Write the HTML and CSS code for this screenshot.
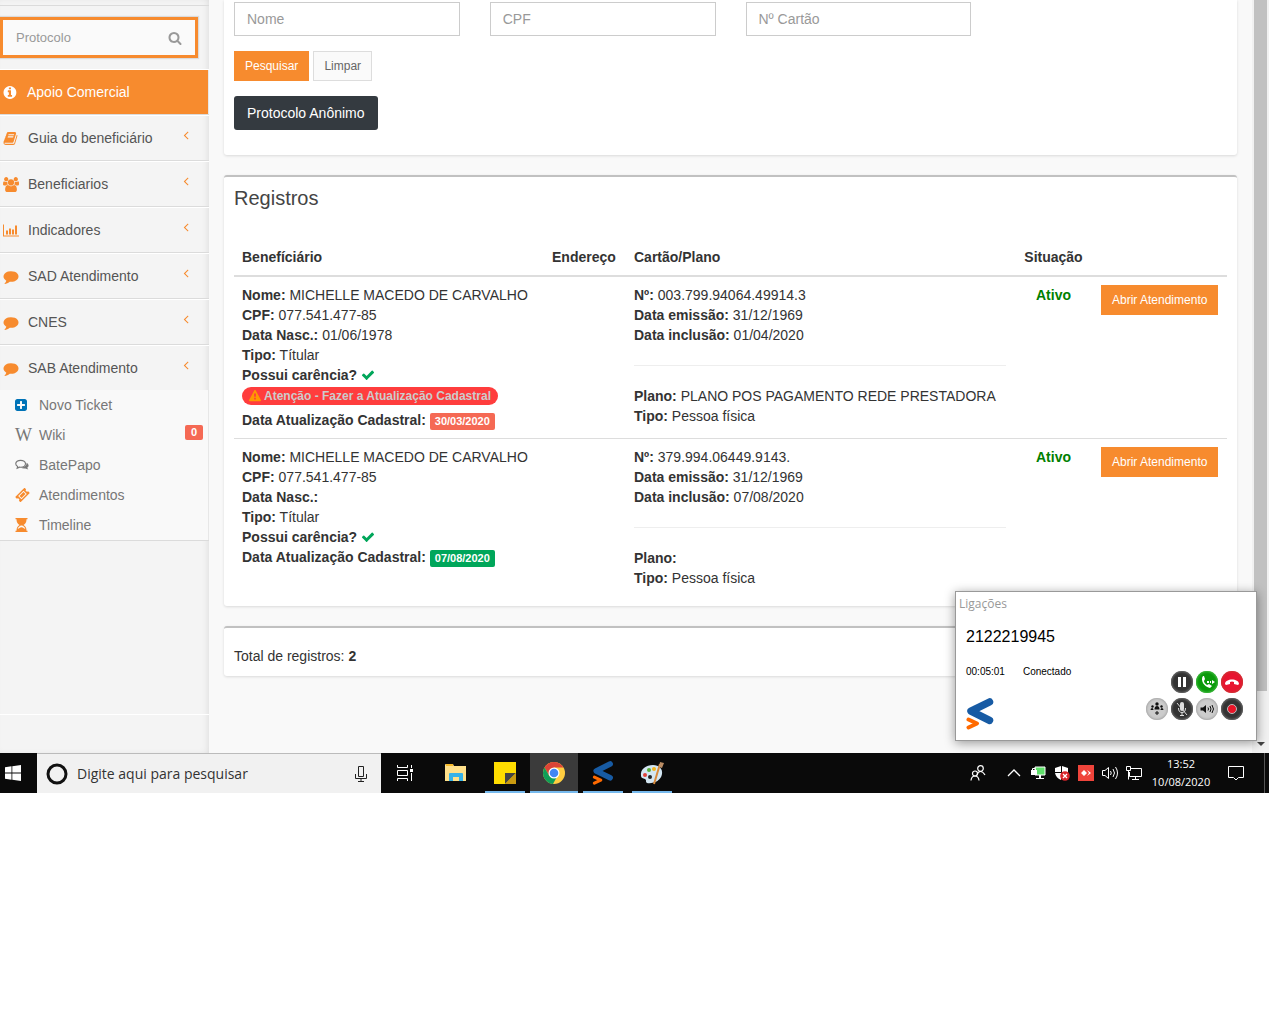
FILE: index.html
```html
<!DOCTYPE html>
<html lang="pt-BR">
<head>
<meta charset="utf-8">
<title>Apoio Comercial</title>
<link rel="stylesheet" href="styles.css">
</head>
<body>
<svg class="sprite" aria-hidden="true">
  <symbol id="i-comment" viewBox="0 0 1792 1792"><path d="M1792 896q0 174-120 321.5t-326 233-450 85.5q-70 0-145-8-198 175-460 242-49 14-114 22-17 2-30.5-9t-17.5-29v-1q-3-4-.5-12t2-10 4.5-9.5l6-9 7-8.5 8-9q7-8 31-34.5t34.5-38 31-39.5 32.5-51 27-59 26-76q-157-89-247.5-220t-90.5-281q0-130 71-248.5t191-204.5 286-136.5 348-50.5q244 0 450 85.5t326 233 120 321.5z"/></symbol>
  <symbol id="i-left" viewBox="0 0 1792 1792"><path d="M1203 544q0 13-10 23l-393 393 393 393q10 10 10 23t-10 23l-50 50q-10 10-23 10t-23-10l-466-466q-10-10-10-23t10-23l466-466q10-10 23-10t23 10l50 50q10 10 10 23z"/></symbol>
  <symbol id="i-check" viewBox="0 0 1792 1792"><path d="M1671 566q0 40-28 68l-724 724-136 136q-28 28-68 28t-68-28l-136-136-362-362q-28-28-28-68t28-68l136-136q28-28 68-28t68 28l294 295 656-657q28-28 68-28t68 28l136 136q28 28 28 68z"/></symbol>
  <symbol id="i-brand" viewBox="0 0 28 32"><path d="M23.500 4 5 13.200 23.500 22.400" fill="none" stroke="#175ba4" stroke-width="7.500" stroke-linecap="round" stroke-linejoin="round"/><path d="M2.500 21.500 11 25.500 2.500 29.500" fill="none" stroke="#ff6a00" stroke-width="4" stroke-linecap="round" stroke-linejoin="round"/></symbol>
</svg>
<div class="screen">
  <div class="workspace">
    <aside class="sidebar">
      <form class="search">
        <input type="text" placeholder="Protocolo" aria-label="Protocolo">
        <button type="button" aria-label="Buscar"><svg viewBox="0 0 1792 1792"><path d="M1216 832q0-185-131.500-316.500t-316.500-131.500-316.500 131.500-131.500 316.500 131.500 316.500 316.500 131.500 316.500-131.500 131.500-316.500zm512 832q0 52-38 90t-90 38q-54 0-90-38l-343-342q-179 124-399 124-143 0-273.500-55.500t-225-150-150-225-55.500-273.500 55.500-273.500 150-225 225-150 273.500-55.500 273.500 55.500 225 150 150 225 55.500 273.500q0 220-124 399l343 343q37 37 37 90z"/></svg></button>
      </form>
      <ul class="menu">
        <li><a class="active" href="#"><svg class="fa" viewBox="128 0 1792 1792"><path d="M1152 1376v-160q0-14-9-23t-23-9h-96v-512q0-14-9-23t-23-9h-320q-14 0-23 9t-9 23v160q0 14 9 23t23 9h96v320h-96q-14 0-23 9t-9 23v160q0 14 9 23t23 9h448q14 0 23-9t9-23zm-128-896v-160q0-14-9-23t-23-9h-192q-14 0-23 9t-9 23v160q0 14 9 23t23 9h192q14 0 23-9t9-23zm640 416q0 209-103 385.500t-279.500 279.500-385.500 103-385.500-103-279.500-279.500-103-385.500 103-385.500 279.500-279.500 385.500-103 385.500 103 279.500 279.500 103 385.500z"/></svg>Apoio Comercial</a></li>
        <li><a href="#"><svg class="fa" viewBox="64 0 1792 1792"><path d="M1703 478q40 57 18 129l-275 906q-19 64-76.500 107.500t-122.500 43.500h-923q-77 0-148.500-53.500t-99.500-131.500q-24-67-2-127 0-4 3-27t4-37q1-8-3-21.500t-3-19.500q2-11 8-21t16.500-23.500 16.500-23.500q23-38 45-91.500t30-91.500q3-10 .5-30t-.5-28q3-11 17-28t17-23q21-36 42-92t25-90q1-9-2.500-32t.5-28q4-13 22-30.500t22-22.500q19-26 42.500-84.500t27.500-96.500q1-8-3-25.500t-2-26.500q2-8 9-18t18-23 17-21q8-12 16.500-30.500t15-35 16-36 19.500-32 26.500-23.500 36-11.500 47.500 5.500l-1 3q38-9 51-9h761q74 0 114 56t18 130l-274 906q-36 119-71.500 153.500t-128.500 34.500h-869q-27 0-38 15-11 16-1 43 24 70 144 70h923q29 0 56-15.500t35-41.500l300-987q7-22 5-57 38 15 59 43zm-1064 2q-4 13 2 22.500t20 9.500h608q13 0 25.500-9.500t16.500-22.500l21-64q4-13-2-22.500t-20-9.500h-608q-13 0-25.500 9.500t-16.500 22.500zm-83 256q-4 13 2 22.500t20 9.500h608q13 0 25.500-9.500t16.500-22.500l21-64q4-13-2-22.500t-20-9.500h-608q-13 0-25.500 9.500t-16.500 22.500z"/></svg>Guia do beneficiário<svg class="arrow"><use href="#i-left"/></svg></a></li>
        <li><a href="#"><svg class="fa" viewBox="-64 0 1920 1792"><path d="M529 896q-162 5-265 128h-134q-82 0-138-40.500t-56-118.500q0-353 124-353 6 0 43.500 21t97.500 42.500 119 21.500q67 0 133-23-5 37-5 66 0 159 93 256zm1071 637q0 120-73 189.500t-194 69.500h-874q-121 0-194-69.500t-73-189.500q0-53 3.500-103.500t14-109 26.500-108.500 43-97.500 62-81 85.500-53.500 111.500-20q10 0 43 21.500t73 48 107 48 135 21.500 135-21.500 107-48 73-48 43-21.500q61 0 111.500 20t85.500 53.500 62 81 43 97.500 26.500 108.500 14 109 3.500 103.500zm-1024-1277q0 106-75 181t-181 75-181-75-75-181 75-181 181-75 181 75 75 181zm704 384q0 159-112.500 271.500t-271.500 112.500-271.500-112.500-112.500-271.500 112.500-271.500 271.500-112.500 271.500 112.500 112.500 271.500zm576 225q0 78-56 118.500t-138 40.500h-134q-103-123-265-128 93-97 93-256 0-29-5-66 66 23 133 23 59 0 119-21.500t97.500-42.500 43.500-21q124 0 124 353zm-128-609q0 106-75 181t-181 75-181-75-75-181 75-181 181-75 181 75 75 181z"/></svg>Beneficiarios<svg class="arrow"><use href="#i-left"/></svg></a></li>
        <li><a href="#"><svg class="fa" viewBox="0 0 16 14"><path d="M0 1h1v11h15v1H0zM3 7h2v4H3zM6 5h2v6H6zM9 6h2v5H9zM12 2h2v9h-2z"/></svg>Indicadores<svg class="arrow"><use href="#i-left"/></svg></a></li>
        <li><a href="#"><svg class="fa"><use href="#i-comment"/></svg>SAD Atendimento<svg class="arrow"><use href="#i-left"/></svg></a></li>
        <li><a href="#"><svg class="fa"><use href="#i-comment"/></svg>CNES<svg class="arrow"><use href="#i-left"/></svg></a></li>
        <li><a href="#"><svg class="fa"><use href="#i-comment"/></svg>SAB Atendimento<svg class="arrow"><use href="#i-left"/></svg></a>
          <ul class="submenu">
            <li><a href="#"><svg class="sub-icon blue" viewBox="128 128 1536 1536"><path d="M1408 960v-128q0-26-19-45t-45-19h-320v-320q0-26-19-45t-45-19h-128q-26 0-45 19t-19 45v320h-320q-26 0-45 19t-19 45v128q0 26 19 45t45 19h320v320q0 26 19 45t45 19h128q26 0 45-19t19-45v-320h320q26 0 45-19t19-45zm256-544v960q0 119-84.500 203.500t-203.500 84.500h-960q-119 0-203.500-84.500t-84.500-203.500v-960q0-119 84.500-203.500t203.500-84.500h960q119 0 203.500 84.500t84.500 203.500z"/></svg>Novo Ticket</a></li>
            <li><a href="#"><span class="sub-icon w-mark">W</span>Wiki<span class="count">0</span></a></li>
            <li><a href="#"><svg class="sub-icon wide" viewBox="0 1 16 14"><path d="M6 3C3 3 .8 4.600.8 6.700c0 1.300.8 2.300 2 3L2.300 11.500 4.800 10.300c.4.100.8.100 1.200.1 2.900 0 5.200-1.600 5.200-3.700S8.900 3 6 3z" fill="none" stroke="currentColor" stroke-width="1.200"/><path d="M12.300 5.500c1.300.7 2.200 1.700 2.200 2.900 0 1-.6 1.900-1.500 2.500l1.200 1.900-3.200-1.200c-2 .3-3.700-.1-4.900-1 3.600 0 6.500-2 6.200-5.100z"/></svg>BatePapo</a></li>
            <li><a href="#"><svg class="sub-icon wide orange" viewBox="-1 1 16 14"><g transform="rotate(-45 7 8)"><path fill-rule="evenodd" d="M0 4h14v2.500a1.500 1.500 0 0 0 0 3V12H0V9.500a1.500 1.500 0 0 0 0-3zM3 5.500v5h8v-5z"/><path d="M4 6.500h6v3H4z"/></g></svg>Atendimentos</a></li>
            <li><a href="#"><svg class="sub-icon wide orange" viewBox="0 1 14 14"><path fill-rule="evenodd" d="M0 1h12v1.300h-1c0 3-1 4.500-3 5.700 2 1.200 3 2.700 3 5.700h1V15H0v-1.300h1c0-3 1-4.500 3-5.700-2-1.200-3-2.700-3-5.700H0zM5.300 8.500C3.500 9.500 2.400 10.600 2.200 12c1.600-.7 2-1.800 3.800-1.800S8.200 11.300 9.800 12c-.2-1.400-1.300-2.500-3.100-3.500z"/></svg>Timeline</a></li>
          </ul>
        </li>
      </ul>
      <div class="sidebar-foot"></div>
    </aside>
    <main class="content">
      <section class="box filter">
        <div class="fields">
          <input type="text" placeholder="Nome" aria-label="Nome">
          <input type="text" placeholder="CPF" aria-label="CPF">
          <input type="text" placeholder="Nº Cartão" aria-label="Nº Cartão">
        </div>
        <div class="actions">
          <button class="btn primary" type="button">Pesquisar</button>
          <button class="btn" type="button">Limpar</button>
        </div>
        <button class="btn-dark" type="button">Protocolo Anônimo</button>
      </section>
      <section class="box ruled records">
        <h2>Registros</h2>
        <table>
          <colgroup><col class="c-ben"><col class="c-end"><col><col class="c-sit"><col class="c-act"></colgroup>
          <thead><tr><th>Benefíciário</th><th>Endereço</th><th>Cartão/Plano</th><th class="center">Situação</th><th></th></tr></thead>
          <tbody>
            <tr>
              <td>
                <div><b>Nome:</b> MICHELLE MACEDO DE CARVALHO</div>
                <div><b>CPF:</b> 077.541.477-85</div>
                <div><b>Data Nasc.:</b> 01/06/1978</div>
                <div><b>Tipo:</b> Títular</div>
                <div><b>Possui carência?</b> <svg class="check"><use href="#i-check"/></svg></div>
                <div class="alert"><span><svg viewBox="0 0 1792 1792"><path d="M1024 1375v-190q0-14-9.500-23.500t-22.500-9.500h-192q-13 0-22.500 9.500t-9.500 23.500v190q0 14 9.500 23.500t22.500 9.500h192q13 0 22.500-9.500t9.500-23.500zm-2-374l18-459q0-12-10-19-13-11-24-11h-220q-11 0-24 11-10 7-10 21l17 457q0 10 10 16.500t24 6.500h185q14 0 23.500-6.500t10.500-16.500zm-14-934l768 1408q35 63-2 126-17 29-46.500 46t-63.500 17h-1536q-34 0-63.500-17t-46.500-46q-37-63-2-126l768-1408q17-31 47-49t65-18 65 18 47 49z"/></svg>Atenção - Fazer a Atualização Cadastral</span></div>
                <div><b>Data Atualização Cadastral:</b> <span class="date late">30/03/2020</span></div>
              </td>
              <td></td>
              <td>
                <div><b>Nº:</b> 003.799.94064.49914.3</div>
                <div><b>Data emissão:</b> 31/12/1969</div>
                <div><b>Data inclusão:</b> 01/04/2020</div>
                <hr>
                <div><b>Plano:</b> PLANO POS PAGAMENTO REDE PRESTADORA</div>
                <div><b>Tipo:</b> Pessoa física</div>
              </td>
              <td class="center status">Ativo</td>
              <td><button class="btn primary" type="button">Abrir Atendimento</button></td>
            </tr>
            <tr>
              <td>
                <div><b>Nome:</b> MICHELLE MACEDO DE CARVALHO</div>
                <div><b>CPF:</b> 077.541.477-85</div>
                <div><b>Data Nasc.:</b></div>
                <div><b>Tipo:</b> Títular</div>
                <div><b>Possui carência?</b> <svg class="check"><use href="#i-check"/></svg></div>
                <div><b>Data Atualização Cadastral:</b> <span class="date ok">07/08/2020</span></div>
              </td>
              <td></td>
              <td>
                <div><b>Nº:</b> 379.994.06449.9143.</div>
                <div><b>Data emissão:</b> 31/12/1969</div>
                <div><b>Data inclusão:</b> 07/08/2020</div>
                <hr>
                <div><b>Plano:</b></div>
                <div><b>Tipo:</b> Pessoa física</div>
              </td>
              <td class="center status">Ativo</td>
              <td><button class="btn primary" type="button">Abrir Atendimento</button></td>
            </tr>
          </tbody>
        </table>
      </section>
      <section class="box ruled total">Total de registros: <b>2</b></section>
    </main>
    <div class="scrollbar"><div class="thumb"></div><svg viewBox="0 0 8 4"><path d="M0 0h8L4 4z"/></svg></div>

    <section class="call" aria-label="Ligações">
      <div class="call-title">Ligações</div>
      <div class="call-number">2122219945</div>
      <div class="call-state"><span>00:05:01</span><span>Conectado</span></div>
      <svg class="call-brand"><use href="#i-brand"/></svg>
      <div class="call-keys">
        <div>
          <button class="key" type="button" aria-label="Pausar"><svg viewBox="0 0 22 22"><path d="M7 6h3v10H7zM12 6h3v10h-3z" fill="#fff"/></svg></button>
          <button class="key green" type="button" aria-label="Transferir"><svg viewBox="0 0 22 22"><path d="M7 5c-3 4 1 11 7 12l2-2-3-2-2 1c-2-1-3-3-3-4l1-2-1-3z" fill="#fff"/><path d="M11 10h2v2h-2zM14 10h1v2h-1zM16 9l3 2-3 2z" fill="#fff"/></svg></button>
          <button class="key red" type="button" aria-label="Desligar"><svg viewBox="0 0 22 22"><path d="M4 13c0-6 14-6 14 0l-1 1-4-1v-2q-2-1-4 0v2l-4 1z" fill="#fff"/></svg></button>
        </div>
        <div>
          <button class="key light" type="button" aria-label="Conferência"><svg viewBox="0 0 22 22"><circle cx="11" cy="6" r="1.700"/><circle cx="6.500" cy="8.500" r="1.200"/><circle cx="15.500" cy="8.500" r="1.200"/><path d="M8.500 11.500q0-3.500 2.500-3.500t2.500 3.500zM4.500 12q0-2 2-2l1.200 2zM17.500 12q0-2-2-2l-1.200 2zM10.500 13h1v1.500H13v1h-1.500V17h-1v-1.500H9v-1h1.500z"/></svg></button>
          <button class="key" type="button" aria-label="Mudo"><svg viewBox="0 0 22 22"><rect x="9" y="4" width="4" height="9" rx="2" fill="#ddd"/><path d="M7.500 10q0 4.500 3.500 4.500t3.500-4.500M11 15v2M9 17.500h4M6 5l10 12" fill="none" stroke="#ddd"/></svg></button>
          <button class="key light" type="button" aria-label="Volume"><svg viewBox="0 0 22 22"><path d="M4.500 9.500h2.500l3-2.500v8l-3-2.500H4.500z"/><path d="M12 9.500q1 1.500 0 3M14 8q2 3 0 6M16 7q3 4 0 8" fill="none" stroke="#111"/></svg></button>
          <button class="key" type="button" aria-label="Gravar"><svg viewBox="0 0 22 22"><circle cx="11" cy="11" r="4.500" fill="#e81427" stroke="#bbb"/></svg></button>
        </div>
      </div>
    </section>
  </div>

  <footer class="taskbar">
    <button class="start" type="button" aria-label="Iniciar"><svg viewBox="0 0 16 16"><path d="M0 2.200 6.500 1.300v6.200H0zM7.300 1.200 16 0v7.500H7.300zM0 8.400h6.500v6.300L0 13.800zM7.300 8.400H16V16l-8.700-1.200z" fill="#fff"/></svg></button>
    <label class="task-search">
      <svg class="ring" viewBox="0 0 22 22"><circle cx="11" cy="11" r="9" fill="none" stroke="#111" stroke-width="3"/></svg>
      <input type="text" placeholder="Digite aqui para pesquisar">
      <svg class="mic" viewBox="0 0 12 16"><path d="M3.500.5h5v10h-5zM.5 8v4.500h11V8M6 12.500v3M3 15.500h6" fill="none" stroke="#222"/></svg>
    </label>
    <nav class="apps">
      <button class="views" type="button" aria-label="Visão de tarefas"><svg viewBox="0 0 16 16"><path d="M.5 0v2.500h10V0M.5 5.500h10v5H.500zM.5 16v-2.500h10V16M14.500 0v3M14.500 8v8" fill="none" stroke="#fff"/><path d="M13 4h3v3h-3z" fill="#fff"/></svg></button>
      <button type="button" aria-label="Explorador"><svg viewBox="0 0 22 20"><path d="M0 2q0-1 1-1h7l1 2h12v15H0z" fill="#ffe08a"/><path d="M1 1h7v2H1z" fill="#f7b928"/><path d="M4 18v-7q0-1 1-1h12q1 0 1 1v7h-4v-4H8v4z" fill="#36b2e8"/></svg></button>
      <button class="open" type="button" aria-label="Notas"><svg viewBox="0 0 22 22"><path d="M0 0h22v22H0z" fill="#fd0"/><path d="M11 11h11L11 22z" fill="#444"/><path d="M22 11v11H11z" fill="#c99a10"/></svg></button>
      <button class="open current" type="button" aria-label="Chrome"><svg viewBox="0 0 22 22"><circle cx="11" cy="11" r="11" fill="#ffcd40"/><path d="M1.500 5.500A11 11 0 0 1 20.500 5.500H11L6.200 13.800z" fill="#db4437"/><path d="M1.500 5.500 6.200 13.800Q9 17 13.500 15.400L10 22A11 11 0 0 1 1.500 5.500z" fill="#0f9d58"/><circle cx="11" cy="11" r="5.500" fill="#fff"/><circle cx="11" cy="11" r="4.300" fill="#4285f4"/></svg></button>
      <button class="open" type="button" aria-label="Ligações"><svg class="brand"><use href="#i-brand"/></svg></button>
      <button class="open" type="button" aria-label="Paint"><svg class="brand" viewBox="0 0 24 24"><path d="M1 15C0 8 6 4 13 4c6 0 10 4 9 9-1 7-9 10-15 9-2-1 0-3-2-4s-4-1-4-3z" fill="#d3e6f2"/><circle cx="5" cy="14" r="2" fill="#e0433a"/><circle cx="9" cy="9" r="2" fill="#59ad3a"/><circle cx="14" cy="8" r="2" fill="#f2b51d"/><circle cx="10" cy="16" r="2" fill="#222"/><path d="M20 3 14 23" stroke="#d88a3c" stroke-width="2"/><path d="m19 6 1-5 4 1-2 5z" fill="#b98c64"/></svg></button>
    </nav>
    <div class="tray">
      <button class="people" type="button" aria-label="Pessoas"><svg viewBox="0 0 16 16"><g fill="none" stroke="#fff" stroke-width="1.200"><circle cx="10.500" cy="3.500" r="2.800"/><path d="M7 10q1-3.500 3.500-3.500T15 10"/><circle cx="5" cy="8.500" r="2.500"/><path d="M1 15.500q.5-4.500 4-4.500t4 4.500"/></g></svg></button>
      <button type="button" aria-label="Ícones ocultos"><svg viewBox="0 0 16 16"><path d="m2 11 6-6 6 6" fill="none" stroke="#fff" stroke-width="1.300"/></svg></button>
      <button type="button" aria-label="Rede segura"><svg viewBox="0 0 16 16"><path d="M5 2h10v8H5z" fill="#5fe06b" stroke="#fff"/><path d="M9 10h2v3h3v1H6v-1h3zM1 5h6v5H1z" fill="#fff"/><path d="M2.500 5V3.500h3V5" fill="none" stroke="#fff"/></svg></button>
      <button type="button" aria-label="Segurança"><svg viewBox="0 0 16 16"><path d="M7 1 1 3v4h6zM8 1l6 2v4H8zM1 8h6v7Q2 13 1 8zM8 8h6q-1 5-6 7z" fill="#fff"/><circle cx="11" cy="11" r="4.800" fill="#d9252b"/><path d="m9 9 4 4m0-4-4 4" stroke="#fff" stroke-width="1.300"/></svg></button>
      <button type="button" aria-label="Acesso remoto"><svg viewBox="0 0 16 16"><path d="M0 0h16v16H0z" fill="#ef443b"/><path d="m6 5 3 3-3 3-3-3zM9 5l4 3-4 3 2-3z" fill="#fff"/></svg></button>
      <button type="button" aria-label="Som"><svg viewBox="0 0 16 16"><path d="M.5 5.500H3l3.500-3v11l-3.500-3H.500zM8.500 6q1.500 2 0 4M11 4q3 4 0 8M13.500 2q4 6 0 12" fill="none" stroke="#fff"/></svg></button>
      <button type="button" aria-label="Rede"><svg viewBox="0 0 16 16"><path d="M5 3.500h10.500v8H3.500V7M9.500 11.500v3M6 14.500h7M.5 1.500h4v4h-4zM2.500 5.500v9" fill="none" stroke="#fff"/></svg></button>
      <div class="clock"><span>13:52</span><span>10/08/2020</span></div>
      <button class="notes" type="button" aria-label="Notificações"><svg viewBox="0 0 16 16"><path d="M.5 1.500h15v11h-5L8 15l-2.500-2.500h-5z" fill="none" stroke="#fff"/></svg></button>
      <div class="desktop-edge"></div>
    </div>
  </footer>
</div>
</body>
</html>
```
FILE: styles.css
```css
* { box-sizing: border-box; }
body {
  margin: 0;
  background: #fff;
  color: #333;
  font: 14px/20px "Liberation Sans", Arial, sans-serif;
}
a { color: inherit; text-decoration: none; }
ul { margin: 0; padding: 0; list-style: none; }
button { padding: 0; border: 0; background: none; font: inherit; color: inherit; }
input { font: inherit; color: inherit; border-radius: 0; }
input::placeholder { color: #999; opacity: 1; }
svg { display: block; fill: currentColor; }
.sprite { position: absolute; width: 0; height: 0; }

.screen { margin-right: 11px; }
.workspace { position: relative; display: flex; background: #f9f9f9; }

/* Sidebar */
.sidebar {
  display: flex;
  flex-direction: column;
  flex: 0 0 209px;
  min-width: 0;
  padding-top: 5px;
  background: #f4f4f4;
  box-shadow: inset -3px 0 8px -4px rgba(0, 0, 0, .15);
}
.search {
  display: flex;
  align-items: center;
  height: 41px;
  margin: 11px 11px 11px 0;
  border: 3px solid #f78b2e;
  background: #fafafa;
  box-shadow: 0 0 1px 1px #dbdbdb;
}
.sidebar::before { content: ""; height: 1px; background: #dbdbdb; }
.search input { flex: 1; width: 0; min-width: 0; padding: 0 13px; border: 0; background: none; font-size: 13px; }
.search button { margin-right: 13px; color: #999; }
.search button svg { width: 14px; height: 14px; }
.menu > li { border-top: 1px solid #fff; border-bottom: 1px solid #dbdbdb; }
.menu > li > a { display: flex; align-items: center; gap: 9px; height: 44px; padding: 0 16px 0 3px; color: #555; }
.menu > li > a.active { margin-right: 1px; gap: 8px; background: #f78b2e; color: #fff; }
.menu .fa { flex: none; width: 16px; height: 15px; color: #f78b2e; }
.menu .active .fa { color: #fff; }
.arrow { width: 14px; height: 14px; margin: 0 0 6px auto; color: #f78b2e; }
.submenu { margin-right: 1px; background: #f9f9f9; }
.submenu a { display: flex; align-items: center; height: 30px; padding: 0 5px 0 15px; color: #777; }
.sub-icon { flex: none; width: 12px; height: 12px; margin-right: 12px; }
.wide { width: 15px; height: 14px; margin-right: 9px; }
.w-mark { font: 18px/12px "Liberation Serif", serif; }
.blue { color: #0073b7; }
.orange { color: #f78b2e; }
.count {
  margin: 0 0 5px auto;
  padding: 0 6px;
  border-radius: 2px;
  background: #f56954;
  color: #fff;
  font: bold 11px/15px "Liberation Sans", Arial, sans-serif;
}
.sidebar-foot { height: 39px; margin-top: auto; border-top: 1px solid #fff; }

/* Main column */
.content { flex: 1; min-width: 0; padding: 0 15px 77px; }
.box { margin-bottom: 20px; padding: 10px; border-radius: 3px; background: #fff; box-shadow: 0 1px 3px rgba(0, 0, 0, .13); }
.ruled { border-top: 2px solid #c1c1c1; }
.filter { padding: 2px 10px 25px; border-radius: 0 0 3px 3px; }
.fields { display: grid; grid-template-columns: repeat(4, 1fr); gap: 30px; }
.fields input { width: 100%; min-width: 0; height: 34px; padding: 0 12px; border: 1px solid #ccc; background: #fff; }
.actions { display: flex; gap: 4px; margin: 15px 0; }
.btn { height: 30px; padding: 0 10px; border: 1px solid #ddd; background: #fafafa; color: #666; font-size: 12px; white-space: nowrap; }
.primary { border-color: #f78b2e; background: #f78b2e; color: #fff; }
.btn-dark { display: block; height: 34px; padding: 0 13px; border-radius: 3px; background: #343a40; color: #fff; }
.records h2 { margin: 0 0 30px; font-size: 20px; line-height: 22px; font-weight: 400; color: #444; }
table { width: 100%; border-collapse: separate; border-spacing: 0; table-layout: fixed; }
.c-ben { width: 310px; }
.c-end { width: 82px; }
.c-sit { width: 79px; }
.c-act { width: 134px; }
th, td { padding: 8px; text-align: left; vertical-align: top; }
th { border-bottom: 2px solid #ddd; }
tr + tr td { border-top: 1px solid #ddd; }
.center { text-align: center; }
.status { color: #008000; font-weight: 700; }
td:last-child .btn { display: block; }
hr { height: 1px; margin: 20px 0; border: 0; background: #eee; }
.check { display: inline-block; width: 14px; height: 14px; color: #00a65a; vertical-align: -2px; }
.alert { padding: 2px 0 5px; }
.alert span {
  display: flex;
  align-items: center;
  gap: 3px;
  width: max-content;
  height: 18px;
  padding: 0 7px;
  border-radius: 9px;
  background: #ff3d3d;
  color: #ccc;
  font-size: 12px;
  font-weight: 700;
}
.alert svg { width: 12px; height: 12px; color: #ff9800; }
.date { display: inline-block; padding: 0 5px; border-radius: 2px; color: #fff; font-size: 11px; font-weight: 700; line-height: 17px; }
.late { background: #f56954; }
.ok { background: #00a65a; }
.total { margin-bottom: 0; padding: 18px 10px 10px; }

.scrollbar { display: flex; flex-direction: column; align-items: center; justify-content: space-between; flex: 0 0 17px; padding-bottom: 7px; background: #f1f1f1; }
.thumb { width: 13px; height: 691px; background: #c1c1c1; }
.scrollbar svg { width: 8px; height: 4px; color: #444; }

/* Softphone window floating over the page */
.call {
  position: absolute;
  right: 12px;
  bottom: 12px;
  display: grid;
  grid-template-columns: 1fr auto;
  grid-template-rows: 24px 42px 28px 1fr;
  width: 302px;
  height: 150px;
  padding-left: 10px;
  border: 1px solid #999;
  background: #fff;
  color: #000;
  box-shadow: 0 2px 10px rgba(0, 0, 0, .4);
}
.call-title { grid-column: 1 / 3; margin-left: -7px; color: #999; font: 12px/24px "Open Sans", sans-serif; }
.call-number { grid-column: 1 / 3; font-size: 16px; line-height: 42px; }
.call-state { display: flex; gap: 18px; font-size: 10px; line-height: 28px; }
.call-brand { grid-row: 4; width: 28px; height: 32px; margin-top: 12px; }
.call-keys { grid-row: 3 / 5; grid-column: 2; display: flex; flex-direction: column; gap: 5px; padding: 13px 13px 0 0; }
.call-keys > div { display: flex; justify-content: flex-end; gap: 3px; }
.key { width: 22px; height: 22px; border-radius: 50%; background: #333; box-shadow: inset 0 0 2px 1px #666; }
.key svg { width: 22px; height: 22px; }
.green { background: #0a9a0a; box-shadow: inset 0 0 2px 1px #3db83d; }
.red { background: #e81430; box-shadow: inset 0 0 2px 1px #c33; }
.light { background: #ccc; color: #111; box-shadow: inset 0 0 2px 1px #aaa; }

/* Taskbar */
.taskbar { display: flex; height: 40px; background: #0a0a0a; color: #fff; font-family: "Open Sans", sans-serif; }
.start { flex: 0 0 37px; padding-left: 5px; }
.start svg { width: 16px; height: 16px; }
.task-search { display: flex; align-items: center; flex: 0 0 344px; padding: 0 14px 0 9px; border-top: 1px solid #bbb; background: #f1f1f1; }
.ring { width: 22px; height: 22px; }
.mic { width: 12px; height: 16px; }
.task-search input { flex: 1; min-width: 0; padding: 0 9px; border: 0; background: none; color: #333; }
.task-search input::placeholder { color: #333; }
.apps { display: flex; gap: 1px; }
.apps button { display: flex; align-items: center; justify-content: center; width: 48px; }
.apps .views { width: 47px; margin-right: 3px; }
.apps svg { width: 22px; height: 22px; }
.apps .brand { width: 24px; height: 24px; }
.apps .views svg { width: 16px; height: 16px; }
.apps .open { background: linear-gradient(#76b9ed, #76b9ed) bottom / 40px 2px no-repeat; }
.apps .current { background: linear-gradient(#76b9ed, #76b9ed) bottom / 48px 2px no-repeat #3b3b3b; }
.tray { display: flex; margin-left: auto; }
.tray button { display: flex; align-items: center; justify-content: center; width: 24px; }
.tray svg { width: 16px; height: 16px; }
.tray .people { margin-right: 12px; }
.clock { display: flex; flex-direction: column; justify-content: center; width: 70px; font-size: 11px; line-height: 18px; text-align: center; }
.tray .notes { width: 40px; margin-right: 8px; }
.desktop-edge { width: 5px; border-left: 1px solid #555; }
```
